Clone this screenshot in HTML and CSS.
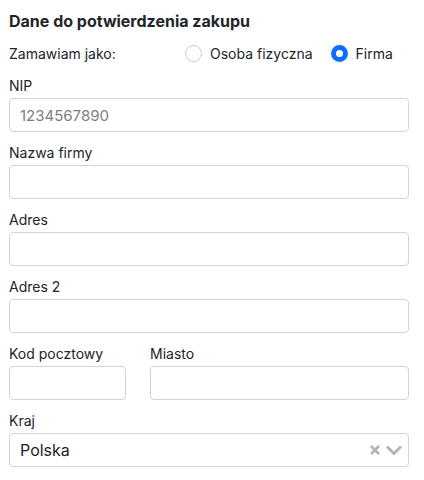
FILE: index.html
```html
<!DOCTYPE html>
<html lang="pl">
<head>
<meta charset="utf-8">
<link rel="stylesheet" href="styles.css">
</head>
<body>
<div class="form">
  <h2 class="title">Dane do potwierdzenia zakupu</h2>
  <div class="as-row">
    <span class="as-label">Zamawiam jako:</span>
    <div class="radios">
      <label class="radio"><span class="dot"></span>Osoba fizyczna</label>
      <label class="radio"><span class="dot on"></span>Firma</label>
    </div>
  </div>
  <div class="field first">
    <div class="label">NIP</div>
    <div class="input placeholder">1234567890</div>
  </div>
  <div class="field">
    <div class="label">Nazwa firmy</div>
    <div class="input"></div>
  </div>
  <div class="field">
    <div class="label">Adres</div>
    <div class="input"></div>
  </div>
  <div class="field">
    <div class="label">Adres 2</div>
    <div class="input"></div>
  </div>
  <div class="split">
    <div class="field">
      <div class="label">Kod pocztowy</div>
      <div class="input"></div>
    </div>
    <div class="field">
      <div class="label">Miasto</div>
      <div class="input"></div>
    </div>
  </div>
  <div class="field">
    <div class="label">Kraj</div>
    <div class="input select">
      <span class="value">Polska</span>
      <span class="icons">
        <svg width="14" height="14" viewBox="0 0 14 14"><path d="M3 3 L11 11 M11 3 L3 11" stroke="#b3b3b3" stroke-width="2.6"/></svg>
        <svg width="18" height="12" viewBox="0 0 18 12"><path d="M2 2.5 L9 9.5 L16 2.5" fill="none" stroke="#b3b3b3" stroke-width="2.8"/></svg>
      </span>
    </div>
  </div>
</div>
</body>
</html>
```
FILE: styles.css
```css
* { box-sizing: border-box; }
html, body { margin: 0; padding: 0; background: #fff; }
body { font-family: Inter, "Noto Sans", sans-serif; color: #212529; font-size: 14px; }
.form { padding: 9px 15px 0 9px; width: 424px; }
.title { font-size: 16px; font-weight: 700; margin: 0; line-height: 24px; }
.as-row { display: flex; align-items: center; height: 32px; margin-top: 4px; }
.as-label { width: 176px; }
.radios { display: flex; align-items: center; gap: 18px; }
.radio { display: flex; align-items: center; gap: 8px; }
.dot { width: 17px; height: 17px; border-radius: 50%; border: 1px solid #c8cbce; background: #fff; }
.dot.on { border: 5px solid #0d6efd; }
.field { display: flex; flex-direction: column; margin-top: 8px; }
.field.first { margin-top: 4px; }
.label { line-height: 21px; height: 23px; padding-top: 2px; margin-bottom: 2px; box-sizing: border-box; }
.input { height: 34px; border: 1px solid #d0d4d8; border-radius: 4px; font-size: 15px; padding: 0 10px; display: flex; align-items: center; }
.placeholder { color: #7a7f85; }
.split { display: grid; grid-template-columns: 117px 1fr; column-gap: 24px; }
.select { font-size: 16px; color: #222; justify-content: space-between; padding-right: 5px; }
.icons { display: flex; align-items: center; gap: 3px; }
```
